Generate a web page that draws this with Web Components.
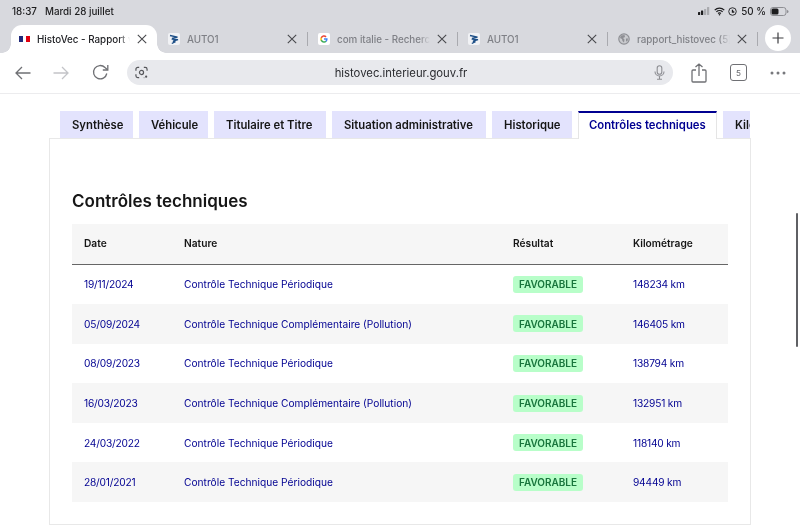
<!DOCTYPE html>
<html lang="fr">
<head>
<meta charset="utf-8">
<title>HistoVec</title>
<style>
  html, body { margin: 0; padding: 0; background: #fff; }
  body { width: 800px; height: 525px; overflow: hidden; position: relative; font-family: "Inter", "Liberation Sans", sans-serif; filter: blur(.3px); }
</style>
</head>
<body>
  <status-bar></status-bar>
  <tab-strip>
    <browser-tab active title-text="HistoVec - Rapport v" icon="flag"></browser-tab>
    <browser-tab title-text="AUTO1" icon="auto1"></browser-tab>
    <browser-tab title-text="com italie - Recherche" icon="google"></browser-tab>
    <browser-tab title-text="AUTO1" icon="auto1"></browser-tab>
    <browser-tab title-text="rapport_histovec (5)" icon="globe"></browser-tab>
  </tab-strip>
  <tool-bar></tool-bar>
  <report-page>
    <report-tabs>
      <report-tab w="73">Synthèse</report-tab>
      <report-tab w="69">Véhicule</report-tab>
      <report-tab w="112">Titulaire et Titre</report-tab>
      <report-tab w="154">Situation administrative</report-tab>
      <report-tab w="80">Historique</report-tab>
      <report-tab w="139" active>Contrôles techniques</report-tab>
      <report-tab w="70">Kilométrage</report-tab>
    </report-tabs>
    <report-panel heading="Contrôles techniques">
      <report-row head date="Date" nature="Nature" result="Résultat" km="Kilométrage"></report-row>
      <report-row date="19/11/2024" nature="Contrôle Technique Périodique" km="148234 km"></report-row>
      <report-row odd date="05/09/2024" nature="Contrôle Technique Complémentaire (Pollution)" km="146405 km"></report-row>
      <report-row date="08/09/2023" nature="Contrôle Technique Périodique" km="138794 km"></report-row>
      <report-row odd date="16/03/2023" nature="Contrôle Technique Complémentaire (Pollution)" km="132951 km"></report-row>
      <report-row date="24/03/2022" nature="Contrôle Technique Périodique" km="118140 km"></report-row>
      <report-row odd date="28/01/2021" nature="Contrôle Technique Périodique" km="94449 km"></report-row>
    </report-panel>
  </report-page>
  <page-scrollbar></page-scrollbar>

<script>
const ICONS = {
  flag: `<svg width="12" height="8" viewBox="0 0 12 8"><rect x="1" y="1" width="4" height="6" fill="#1f2a7a"/><rect x="5" y="1" width="3" height="6" fill="#fff"/><rect x="8" y="1" width="4" height="6" fill="#e1000f"/></svg>`,
  auto1: `<svg width="12" height="12" viewBox="0 0 12 12"><rect width="12" height="12" rx="2" fill="#f1f2f5"/><path d="M2 2.500L9.500 4.200 4 5.400M3.600 6.200L10 6.600 5 8.200M4.800 8.800L7.500 8.600 3.800 10.500" fill="none" stroke="#1d4f87" stroke-width="1.300"/></svg>`,
  google: `<svg width="12" height="12" viewBox="0 0 12 12"><rect width="12" height="12" rx="2" fill="#fff"/><path d="M9.600 6.100c0-.3 0-.5-.1-.8H6v1.500h2a1.700 1.700 0 0 1-.7 1.100v.9h1.200c.7-.6 1.100-1.600 1.100-2.700z" fill="#4285f4"/><path d="M6 9.700c1 0 1.800-.3 2.500-.9l-1.200-.9c-.3.2-.8.4-1.300.4-1 0-1.800-.7-2.100-1.500H2.700v1A3.700 3.700 0 0 0 6 9.700z" fill="#34a853"/><path d="M3.900 6.800a2.200 2.200 0 0 1 0-1.500v-1H2.700a3.700 3.700 0 0 0 0 3.500z" fill="#fbbc05"/><path d="M6 3.800c.6 0 1.100.2 1.500.6l1.100-1.100A3.700 3.700 0 0 0 2.700 4.300l1.200 1C4.200 4.400 5 3.800 6 3.800z" fill="#ea4335"/></svg>`,
  globe: `<svg width="12" height="12" viewBox="0 0 12 12"><circle cx="6" cy="6" r="5.200" fill="#c9cace" stroke="#8e8f94" stroke-width="1.200"/><path d="M3 2.500L6.500 2 7 4 5 5 6.500 6.500 6 9.500 4.500 8 4 6 2 5ZM8 5.500L10 5.500 9.500 8 8 8.500Z" fill="#8e8f94"/></svg>`
};

class StatusBar extends HTMLElement {
  constructor() {
    super();
    this.attachShadow({ mode: 'open' });
    this.shadowRoot.innerHTML = `
      <style>
        :host { display: flex; align-items: center; height: 25px; box-sizing: border-box; padding: 0 11px 3px 12px; background: #d8d9de; color: #1c1c1e; font: 500 9.800px "Inter", "Liberation Sans", sans-serif; }
        .date { margin-left: 8px; }
        .right { margin-left: auto; display: flex; align-items: center; gap: 3px; }
        .pct { margin: 0 1px; }
        svg { display: block; }
      </style>
      <span>18:37</span><span class="date">Mardi 28 juillet</span>
      <div class="right">
        <svg width="13" height="8" viewBox="0 0 13 8"><rect x="0" y="5" width="2.200" height="3" rx=".5" fill="#1c1c1e"/><rect x="3" y="3.500" width="2.200" height="4.500" rx=".5" fill="#1c1c1e"/><rect x="6" y="2" width="2.200" height="6" rx=".5" fill="#a9aaae"/><rect x="9" y="0" width="2.200" height="8" rx=".5" fill="#a9aaae"/></svg>
        <svg width="11" height="9" viewBox="0 0 12 9"><path d="M.8 3a7.500 7.500 0 0 1 10.400 0M2.600 4.900a5 5 0 0 1 6.800 0M4.400 6.700a2.400 2.400 0 0 1 3.200 0" fill="none" stroke="#1c1c1e" stroke-width="1.400"/><circle cx="6" cy="8" r=".9" fill="#1c1c1e"/></svg>
        <svg width="9" height="9" viewBox="0 0 10 10"><circle cx="5" cy="5" r="4.200" fill="none" stroke="#1c1c1e" stroke-width="1"/><path d="M5 3v2.500h2" fill="none" stroke="#1c1c1e" stroke-width="1.500"/></svg>
        <span class="pct">50 %</span>
        <svg width="19" height="9" viewBox="0 0 19 9"><rect x=".5" y=".5" width="15.500" height="8" rx="2.500" fill="none" stroke="#8d8e93"/><rect x="1.500" y="1.500" width="7" height="6" rx="1.500" fill="#1c1c1e"/><path d="M17 3a1.500 1.500 0 0 1 0 3z" fill="#8d8e93"/></svg>
      </div>
    `;
  }
}
customElements.define('status-bar', StatusBar);

class TabStrip extends HTMLElement {
  constructor() {
    super();
    this.attachShadow({ mode: 'open' });
    this.shadowRoot.innerHTML = `
      <style>
        :host { display: flex; align-items: stretch; height: 28px; padding-left: 8px; background: #d8d9de; }
        .plus { width: 26px; height: 26px; border-radius: 50%; background: #fff; margin: 0 0 0 7px; display: flex; align-items: center; justify-content: center; align-self: flex-start; }
      </style>
      <slot></slot>
      <div class="plus"><svg width="12" height="12" viewBox="0 0 12 12"><path d="M6 .5v11M.5 6h11" stroke="#3c3c40" stroke-width="1.200"/></svg></div>
    `;
  }
}
customElements.define('tab-strip', TabStrip);

class BrowserTab extends HTMLElement {
  constructor() {
    super();
    this.attachShadow({ mode: 'open' });
  }
  connectedCallback() {
    const title = this.getAttribute('title-text');
    const icon = ICONS[this.getAttribute('icon')];
    this.shadowRoot.innerHTML = `
      <style>
        :host { display: flex; align-items: center; box-sizing: border-box; width: 150px; height: 28px; padding: 0 8px 0 10px; position: relative; color: #7f8086; font: 500 9.800px "Inter", "Liberation Sans", sans-serif; }
        :host([active]) { color: #222327; }
        :host([active])::before { content: ""; position: absolute; left: 3px; right: 1px; top: 0; bottom: 0; background: #fff; border-radius: 11px 11px 0 0; }
        .flare { position: absolute; bottom: 0; width: 9px; height: 9px; display: none; }
        :host([active]) .flare { display: block; }
        .fl { left: -6px; background: radial-gradient(circle at 0 0, transparent 8.500px, #fff 9px); }
        .fr { right: -8px; background: radial-gradient(circle at 100% 0, transparent 8.500px, #fff 9px); }
        .icon { position: relative; display: flex; width: 12px; flex: none; }
        .title { position: relative; margin-left: 7px; width: 93px; flex: none; white-space: nowrap; overflow: hidden; -webkit-mask-image: linear-gradient(90deg, #000 88%, transparent); mask-image: linear-gradient(90deg, #000 88%, transparent); }
        .x { position: relative; margin-left: 7px; display: flex; flex: none; }
        .sep { position: absolute; right: 0; top: 7px; height: 14px; width: 1px; background: #a9aaaf; }
        :host([active]) .sep { display: none; }
      </style>
      <span class="flare fl"></span><span class="flare fr"></span>
      <span class="icon">${icon}</span>
      <span class="title">${title}</span>
      <span class="x"><svg width="10" height="10" viewBox="0 0 10 10"><path d="M.8.800l8.400 8.400M9.200.800L.8 9.200" stroke="#48494d" stroke-width="1.100"/></svg></span>
      <span class="sep"></span>
    `;
  }
}
customElements.define('browser-tab', BrowserTab);

class ToolBar extends HTMLElement {
  constructor() {
    super();
    this.attachShadow({ mode: 'open' });
    this.shadowRoot.innerHTML = `
      <style>
        :host { display: flex; align-items: center; box-sizing: border-box; height: 41px; padding: 0 0 1px 15px; background: #fff; border-bottom: 1px solid #ececee; }
        svg { flex: none; display: block; }
        .omni { flex: none; width: 546px; height: 25px; margin-left: 18px; border-radius: 13px; background: #e8e9ed; display: flex; align-items: center; padding: 0 8px 0 8px; box-sizing: border-box; color: #2a2b2f; font: 400 11.300px "Inter", "Liberation Sans", sans-serif; }
        .url { flex: 1; text-align: center; padding-top: 1px; }
        .count { flex: none; box-sizing: border-box; width: 17px; height: 17px; margin-left: 23px; border: 1.200px solid #6f7074; border-radius: 3px; color: #6f7074; font: 500 8px "Inter", sans-serif; display: flex; align-items: center; justify-content: center; }
      </style>
      <svg width="16" height="14" viewBox="0 0 16 14"><path d="M15.500 7H1M7 1L1 7l6 6" fill="none" stroke="#6f7074" stroke-width="1.300"/></svg>
      <svg style="margin-left:22px" width="16" height="14" viewBox="0 0 16 14"><path d="M.5 7H15M9 1l6 6-6 6" fill="none" stroke="#c3c4c8" stroke-width="1.300"/></svg>
      <svg style="margin-left:23px" width="17" height="17" viewBox="0 0 17 17"><path d="M14.800 9.500A6.700 6.700 0 1 1 13 3.500L15.500 5.800" fill="none" stroke="#6f7074" stroke-width="1.300"/><path d="M15.800 1v5h-5" fill="none" stroke="#6f7074" stroke-width="1.300"/></svg>
      <div class="omni">
        <svg width="13" height="13" viewBox="0 0 14 14"><path d="M1 5V3.500A2 2 0 0 1 3 1.500h1.500M9.500 1.500H11a2 2 0 0 1 2 2V5M1 9v1.500a2 2 0 0 0 2 2h1.500M9.500 12.500h.5" fill="none" stroke="#55565a" stroke-width="1.300"/><circle cx="7" cy="7" r="2.200" fill="none" stroke="#55565a" stroke-width="1.300"/><circle cx="12" cy="11.500" r="1.200" fill="#55565a"/></svg>
        <span class="url">histovec.interieur.gouv.fr</span>
        <svg width="11" height="15" viewBox="0 0 11 15"><rect x="3.200" y=".7" width="4.600" height="8.600" rx="2.300" fill="none" stroke="#8d8e93" stroke-width="1.100"/><path d="M1 6.500a4.500 4.500 0 0 0 9 0M5.500 11v3M3 14.300h5" fill="none" stroke="#8d8e93" stroke-width="1.100"/></svg>
      </div>
      <svg style="margin-left:18px" width="16" height="20" viewBox="0 0 16 20"><path d="M5 7H2a1 1 0 0 0-1 1v10a1 1 0 0 0 1 1h12a1 1 0 0 0 1-1V8a1 1 0 0 0-1-1h-3M8 13V1M4.500 4L8 1l3.500 3" fill="none" stroke="#6f7074" stroke-width="1.300"/></svg>
      <span class="count">5</span>
      <svg style="margin-left:23px" width="16" height="4" viewBox="0 0 16 4"><circle cx="2" cy="2" r="1.500" fill="#77787c"/><circle cx="8" cy="2" r="1.500" fill="#77787c"/><circle cx="14" cy="2" r="1.500" fill="#77787c"/></svg>
    `;
  }
}
customElements.define('tool-bar', ToolBar);

class ReportPage extends HTMLElement {
  constructor() {
    super();
    this.attachShadow({ mode: 'open' });
    this.shadowRoot.innerHTML = `
      <style>
        :host { display: block; box-sizing: border-box; width: 702px; margin-left: 49px; padding-top: 17px; color: #161616; font-family: "Inter", "Liberation Sans", sans-serif; }
      </style>
      <slot></slot>
    `;
  }
}
customElements.define('report-page', ReportPage);

class ReportTabs extends HTMLElement {
  constructor() {
    super();
    this.attachShadow({ mode: 'open' });
    this.shadowRoot.innerHTML = `
      <style>
        :host { display: flex; gap: 6px; height: 28px; width: 701px; box-sizing: border-box; padding-left: 11px; overflow: hidden; margin-bottom: -1px; position: relative; z-index: 1; }
      </style>
      <slot></slot>
    `;
  }
}
customElements.define('report-tabs', ReportTabs);

class ReportTab extends HTMLElement {
  constructor() {
    super();
    this.attachShadow({ mode: 'open' });
  }
  connectedCallback() {
    this.shadowRoot.innerHTML = `
      <style>
        :host { display: flex; flex: none; align-items: center; box-sizing: border-box; width: ${this.getAttribute('w')}px; height: 27px; padding-left: 12px; background: #e3e3fd; color: #161616; font-size: 11.300px; font-weight: 600; white-space: nowrap; overflow: hidden; }
        :host([active]) { height: 28px; background: #fff; color: #000091; border-top: 2px solid #000091; border-left: 1px solid #e5e5e5; border-right: 1px solid #e5e5e5; padding: 0 0 2px 10px; }
      </style>
      <slot></slot>
    `;
  }
}
customElements.define('report-tab', ReportTab);

class ReportPanel extends HTMLElement {
  constructor() {
    super();
    this.attachShadow({ mode: 'open' });
  }
  connectedCallback() {
    this.shadowRoot.innerHTML = `
      <style>
        :host { display: block; box-sizing: border-box; border: 1px solid #e8e8e8; padding: 0 22px 22px; }
        h2 { margin: 0; padding-top: 50px; height: 85px; box-sizing: border-box; font-size: 17px; line-height: 24px; font-weight: 600; color: #161616; }
      </style>
      <h2>${this.getAttribute('heading')}</h2>
      <slot></slot>
    `;
  }
}
customElements.define('report-panel', ReportPanel);

class ReportRow extends HTMLElement {
  constructor() {
    super();
    this.attachShadow({ mode: 'open' });
  }
  connectedCallback() {
    const head = this.hasAttribute('head');
    const result = head
      ? `<span>${this.getAttribute('result')}</span>`
      : `<status-badge>FAVORABLE</status-badge>`;
    this.shadowRoot.innerHTML = `
      <style>
        :host { display: grid; grid-template-columns: 100px 329px 120px 1fr; align-items: center; height: 39.600px; color: #000091; font-size: 10.200px; }
        :host([odd]) { background: #f6f6f6; }
        :host([head]) { height: 40.500px; padding-bottom: 2px; background: #f6f6f6; border-bottom: 1px solid #666; box-sizing: border-box; color: #161616; font-weight: 600; }
        div { padding-left: 12px; white-space: nowrap; }
        :host(:not([head])) .num { letter-spacing: -.2px; }
      </style>
      <div class="num">${this.getAttribute('date')}</div>
      <div>${this.getAttribute('nature')}</div>
      <div>${result}</div>
      <div class="num">${this.getAttribute('km')}</div>
    `;
  }
}
customElements.define('report-row', ReportRow);

class StatusBadge extends HTMLElement {
  constructor() {
    super();
    this.attachShadow({ mode: 'open' });
    this.shadowRoot.innerHTML = `
      <style>
        :host { display: inline-flex; align-items: center; justify-content: center; box-sizing: border-box; width: 70px; height: 17px; border-radius: 3px; background: #b8fec9; color: #18753c; font-size: 10px; font-weight: 600; }
      </style>
      <slot></slot>
    `;
  }
}
customElements.define('status-badge', StatusBadge);

class PageScrollbar extends HTMLElement {
  constructor() {
    super();
    this.attachShadow({ mode: 'open' });
    this.shadowRoot.innerHTML = `
      <style>
        :host { display: block; position: absolute; left: 796px; top: 213px; width: 2px; height: 134px; border-radius: 1px; background: #5f6064; }
      </style>
    `;
  }
}
customElements.define('page-scrollbar', PageScrollbar);
</script>
</body>
</html>
